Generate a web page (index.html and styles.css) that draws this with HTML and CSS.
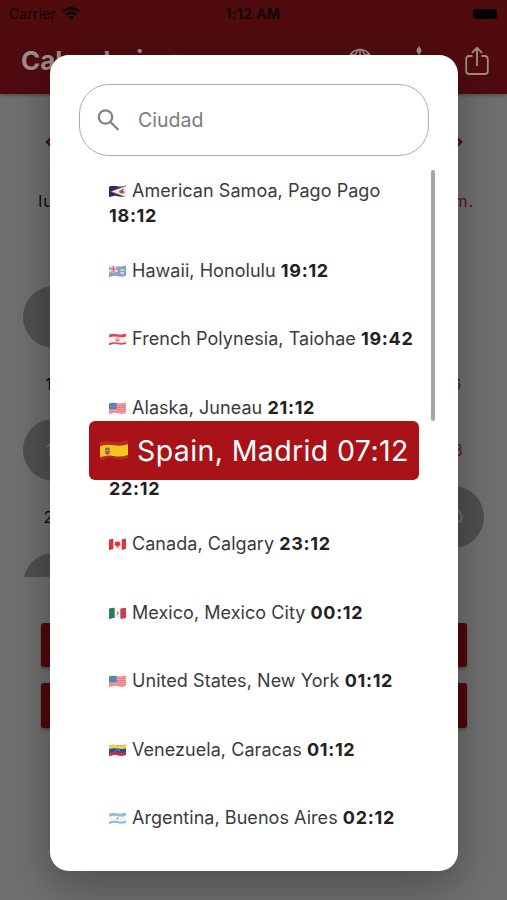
FILE: index.html
```
<!DOCTYPE html>
<html lang="es">
<head>
<meta charset="utf-8">
<title>Calendario</title>
<link rel="stylesheet" href="styles.css">
</head>
<body>
<svg class="defs" width="0" height="0">
  <defs>
    <clipPath id="wave"><path d="M0 1.6C4 -.4 7 .8 10 1.2S15 .6 18 .2V11C14 12.6 11 11.8 8 11.2S3 11.6 0 12.6Z"/></clipPath>
    <symbol id="usa" viewBox="0 0 18 13"><g clip-path="url(#wave)"><path fill="#f5a9ad" d="M0 0h18v13H0z"/><path stroke="#e8737e" d="M0 1.5h18M0 3.5h18M0 5.5h18M0 7.5h18M0 9.5h18M0 11.5h18"/><path fill="#4e7fb5" d="M0 0h8v7H0z"/><path stroke="#9dbbd9" stroke-width=".6" stroke-dasharray=".7 1" d="M1 2.8h6.500M1 4.800h6.500"/></g></symbol>
  </defs>
</svg>
<div class="screen">
  <header class="header">
    <div class="status">
      <div class="carrier">Carrier
        <svg width="18" height="13" viewBox="0 0 18 13" fill="none" stroke="#0b0303" stroke-width="2.500"><path d="M1 4.700Q9-2.100 17 4.700M4 7.900Q9 3.700 14 7.900"/><path fill="#0b0303" stroke="none" d="M6.300 10Q9 7.800 11.700 10L9 13Z"/></svg>
      </div>
      <div class="clock">1:12 AM</div>
      <div class="battery"></div>
    </div>
    <div class="bar">
      <h1 class="title">Calendario <svg width="18" height="16" viewBox="0 0 18 16"><path fill="#71343a" d="M0 2Q9-1 18 2v12H0z"/></svg></h1>
      <div class="actions">
        <svg width="26" height="26" viewBox="0 0 26 26" fill="none" stroke="#9f8f8b" stroke-width="1.700"><circle cx="13" cy="13" r="11.500"/><ellipse cx="13" cy="13" rx="5.500" ry="11.500"/><path d="M13 1.500v23M2 13h22M4 6Q13 10 22 6"/></svg>
        <svg width="26" height="30" viewBox="0 0 26 30" fill="#9f8f8b"><path d="M13 0Q18 6 13 8Q8 6 13 0M12.300 7h1.400v5h-1.400zM4 12h18v14H4z"/></svg>
        <svg width="26" height="30" viewBox="0 0 26 30" fill="none" stroke="#9f8f8b" stroke-width="1.800"><path d="M8.500 10H5Q2.200 10 2.200 13v12q0 3 3 3h15.600q3 0 3-3V13q0-3-3-3H17.500M13 20V2M8 6.800L13 1.800l5 5"/></svg>
      </div>
    </div>
  </header>
  <main class="page">
    <div class="arrows">
      <svg width="8" height="12" viewBox="0 0 8 12"><path d="M6 2L2 6l4 4"/></svg>
      <svg width="8" height="12" viewBox="0 0 8 12"><path d="M2 2l4 4-4 4"/></svg>
    </div>
    <div class="line week"><span>lun.</span><span class="red">dom.</span></div>
    <div class="days">
      <div class="line"><span class="dot">3</span><span class="red">9</span></div>
      <div class="line"><span>10</span><span class="red">16</span></div>
      <div class="line"><span class="dot">17</span><span class="red">23</span></div>
      <div class="line"><span>24</span><span class="dot">30</span></div>
      <div class="line"><span class="dot"></span></div>
    </div>
    <div class="buttons"><div class="button"></div><div class="button"></div></div>
  </main>
  <section class="dialog">
    <div class="search">
      <svg width="24" height="24" viewBox="0 0 24 24" fill="none" stroke="#858585" stroke-width="2.300"><circle cx="8.500" cy="9" r="6.700"/><path d="M13.400 13.900L21.500 22"/></svg>
      <span>Ciudad</span>
    </div>
    <div class="list">
      <div class="item double"><p><svg class="flag" viewBox="0 0 18 13"><g clip-path="url(#wave)"><path fill="#29296f" d="M0 0h18v13H0z"/><path fill="#c25b63" d="M18 0L1 6.500 18 13z"/><path fill="#f3eeee" d="M18 1L3 6.500 18 12z"/><path fill="#8a6235" d="M10 7l4-3 2-1-1 3 2 1-3 2z"/></g></svg><span>American Samoa, Pago Pago</span> <b>18:12</b></p></div>
      <div class="item"><p><svg class="flag" viewBox="0 0 18 13"><g clip-path="url(#wave)"><path fill="#86a2c8" d="M0 0h18v13H0z"/><path stroke="#e9dfe6" stroke-width="2" d="M0 0l9 7M9 0L0 7M4.500 0v8M0 3.800h9"/><path stroke="#c94c5b" d="M4.500 0v7.500M0 3.800h9"/><path fill="#d6d8d5" d="M12 4h4v4l-2 2-2-2z"/><path stroke="#92948a" d="M12 6.500h4"/></g></svg><span>Hawaii, Honolulu</span> <b>19:12</b></p></div>
      <div class="item"><p><svg class="flag" viewBox="0 0 18 13"><g clip-path="url(#wave)"><path fill="#d9495d" d="M0 0h18v13H0z"/><path fill="#f8eeee" d="M0 4.200q5-1.500 9-.5t9-.5v6q-5 1.500-9 .5t-9 .5z"/><circle cx="9" cy="6.500" r="2.300" fill="#e9aa91"/><path stroke="#c66d62" d="M7.500 7.500h3"/></g></svg><span>French Polynesia, Taiohae</span> <b>19:42</b></p></div>
      <div class="item"><p><svg class="flag"><use href="#usa"/></svg><span>Alaska, Juneau</span> <b>21:12</b></p></div>
      <div class="item double"><p class="second"><b>22:12</b></p></div>
      <div class="item"><p><svg class="flag" viewBox="0 0 18 13"><g clip-path="url(#wave)"><path fill="#f8eeee" d="M0 0h18v13H0z"/><path fill="#e03434" d="M0 0h4.500v13H0zM13.500 0H18v13h-4.500zM9 2.500l1 1.500 1.700-.3-.3 1.700 1 1-2.600 2.300H9.400V10h-.8V8.700H8.200L5.600 6.400l1-1-.3-1.700L8 4z"/></g></svg><span>Canada, Calgary</span> <b>23:12</b></p></div>
      <div class="item"><p><svg class="flag" viewBox="0 0 18 13"><g clip-path="url(#wave)"><path fill="#f1f1ed" d="M0 0h18v13H0z"/><path fill="#2f7960" d="M0 0h6v13H0z"/><path fill="#c93b50" d="M12 0h6v13h-6z"/><path fill="#a09680" d="M8 5l2-.7.5 2L9 8.300 7.700 7.500 9 6.500z"/></g></svg><span>Mexico, Mexico City</span> <b>00:12</b></p></div>
      <div class="item"><p><svg class="flag"><use href="#usa"/></svg><span>United States, New York</span> <b>01:12</b></p></div>
      <div class="item"><p><svg class="flag" viewBox="0 0 18 13"><g clip-path="url(#wave)"><path fill="#2d4a9a" d="M0 0h18v13H0z"/><path fill="#f0d33b" d="M0 0h18v4q-5 1.500-9 .5t-9 .5z"/><path fill="#cb2f43" d="M0 9q5-1.500 9-.5t9-.5v5H0z"/><path fill="none" stroke="#c5cce4" stroke-dasharray=".8 1" d="M6 7.500q3-3 6 0"/></g></svg><span>Venezuela, Caracas</span> <b>01:12</b></p></div>
      <div class="item"><p><svg class="flag" viewBox="0 0 18 13"><g clip-path="url(#wave)"><path fill="#8fbfe4" d="M0 0h18v13H0z"/><path fill="#f3f5f5" d="M0 4.500q5-1.500 9-.5t9-.5v5.200q-5 1.500-9 .5t-9 .5z"/><circle cx="9" cy="6.500" r="1.400" fill="#dcb574"/></g></svg><span>Argentina, Buenos Aires</span> <b>02:12</b></p></div>
    </div>
    <div class="thumb"></div>
    <div class="selected">
      <svg width="28" height="21" viewBox="0 0 18 13" preserveAspectRatio="none"><g clip-path="url(#wave)"><path fill="#b92a24" d="M0 0h18v13H0z"/><path fill="#f4c51e" d="M0 3.800q4-1.400 9-.6t9-.6V9.300q-5 1.500-9 .6t-9 .8z"/><path fill="#9b5e31" d="M3.400 4.800h2.800v3.500l-1.400 1-1.400-1z"/><path stroke="#d9b4a0" stroke-width=".6" d="M4 6.500h1.600M2.700 5v4M6.900 5v4"/><path fill="none" stroke="#7f4a17" stroke-opacity=".4" stroke-width=".7" d="M0 12.400Q5 10.500 9 11.400T18 10.900"/></g></svg>
      <span>Spain, Madrid 07:12</span>
    </div>
  </section>
</div>
</body>
</html>
```
FILE: styles.css
```
* { box-sizing: border-box; }
body { margin: 0; font-family: Inter, "Liberation Sans", sans-serif; }
.defs { position: absolute; }
.screen { position: relative; width: 507px; height: 900px; overflow: hidden; background: #707070; }
.header { height: 94px; background: #500b0e; box-shadow: 0 1px 4px rgba(0,0,0,.4); position: relative; }
.status { display: grid; grid-template-columns: 1fr auto 1fr; align-items: center; height: 27px; padding: 0 10px 0 9px; color: #0b0303; font-size: 14px; }
.carrier { display: flex; align-items: center; gap: 6px; letter-spacing: .15px; }
.clock { font-weight: 600; letter-spacing: .4px; }
.battery { justify-self: end; width: 24px; height: 10px; border-radius: 3px; background: #050102; }
.bar { display: flex; justify-content: space-between; align-items: center; height: 67px; padding: 0 17px 0 21px; }
.title { margin: 0; font-size: 26px; font-weight: 700; color: #9f8f8b; letter-spacing: 0; }
.actions { display: flex; align-items: center; gap: 32.500px; }
.page { height: 806px; }
.arrows { display: flex; justify-content: space-between; padding: 42px 44.500px 0; }
.arrows svg { fill: none; stroke: #5c0618; stroke-width: 2.500; display: block; }
.line { display: flex; justify-content: space-between; align-items: center; height: 66.700px; padding: 0 23px; font-size: 16px; color: #090909; }
.line span { width: 62px; height: 62px; line-height: 62px; text-align: center; letter-spacing: .5px; }
.line .red { color: #5c101b; }
.line .dot { border-radius: 50%; background: #505050; color: #777; }
.week { height: 62px; margin-top: 22px; }
.week span { letter-spacing: 1px; }
.days { height: 293px; margin-top: 51.500px; overflow: hidden; }
.buttons { display: grid; gap: 16px; padding: 46px 40px 0 41px; }
.button { height: 44.500px; border-radius: 3px; background: #4f080a; box-shadow: 0 2px 3px rgba(0,0,0,.3); }
.dialog { position: absolute; left: 50px; top: 54.500px; width: 408px; height: 816px; border-radius: 19px; background: #fff; box-shadow: 0 14px 42px 4px rgba(0,0,0,.28); }
.search { display: flex; align-items: center; gap: 17px; width: 350px; height: 72px; margin: 29px 0 0 29px; padding-left: 17px; border: 1.500px solid #adadad; border-radius: 30px; color: #7b7b7b; font-size: 19.500px; letter-spacing: 0; }
.list { margin-top: 13px; padding-left: 59px; }
.item { display: flex; align-items: center; height: 68.400px; color: #3b3b3b; font-size: 18px; line-height: 24.400px; letter-spacing: .05px; }
.double { padding-top: 2px; }
.item p { margin: 0; width: 308px; }
.item b { color: #222; font-weight: 700; letter-spacing: .7px; }
.item .second { padding-top: 24.400px; }
.flag { width: 17px; height: 13px; margin-right: 6px; vertical-align: -1px; }
.thumb { position: absolute; left: 381px; top: 115px; width: 4px; height: 251.500px; border-radius: 2px; background: #a5a5a5; }
.selected { position: absolute; left: 39px; top: 366.500px; width: 330px; height: 59px; border-radius: 6px; background: #a91318; color: #fff; display: flex; align-items: center; gap: 9px; padding-left: 11px; font-size: 28.500px; letter-spacing: .38px; white-space: nowrap; }
```
